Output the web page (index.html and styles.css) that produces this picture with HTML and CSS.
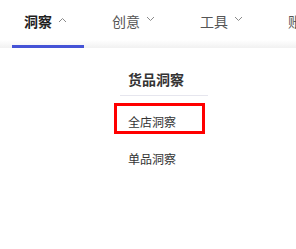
FILE: index.html
```html
<!DOCTYPE html>
<html lang="zh">
<head>
<meta charset="utf-8">
<link rel="stylesheet" href="styles.css">
</head>
<body>
<div class="header">
  <div class="tab active">
    <span class="label">洞察</span>
    <svg class="chev" width="9" height="6" viewBox="0 0 9 6"><path d="M1 5 L4.5 1.5 L8 5" fill="none" stroke="#8a8a8a" stroke-width="1"/></svg>
  </div>
  <div class="tab">
    <span class="label">创意</span>
    <svg class="chev down" width="9" height="6" viewBox="0 0 9 6"><path d="M1 1 L4.5 4.5 L8 1" fill="none" stroke="#8a8a8a" stroke-width="1"/></svg>
  </div>
  <div class="tab">
    <span class="label">工具</span>
    <svg class="chev down" width="9" height="6" viewBox="0 0 9 6"><path d="M1 1 L4.5 4.5 L8 1" fill="none" stroke="#8a8a8a" stroke-width="1"/></svg>
  </div>
  <div class="tab">
    <span class="label">账户</span>
  </div>
</div>
<div class="menu">
  <div class="menu-title">货品洞察</div>
  <div class="menu-item highlighted">全店洞察</div>
  <div class="menu-item">单品洞察</div>
</div>
</body>
</html>
```
FILE: styles.css
```css
html, body {
  margin: 0;
  padding: 0;
  background: #fff;
  overflow: hidden;
  width: 296px;
  height: 249px;
}
body {
  font-family: "Noto Sans CJK SC", "Noto Sans", sans-serif;
}
.header {
  display: flex;
  gap: 16px;
  height: 48px;
  padding-left: 12px;
  box-sizing: border-box;
  background: linear-gradient(to bottom, #ffffff 0, #ffffff 40px, #f1f1f1 48px);
  white-space: nowrap;
}
.tab {
  flex: 0 0 72px;
  box-sizing: border-box;
  padding: 13px 12px 0;
  display: flex;
  align-items: flex-start;
  gap: 6px;
  height: 48px;
  border-bottom: 3px solid transparent;
}
.tab.active {
  border-bottom-color: #4553d6;
}
.label {
  font-size: 14px;
  line-height: 16px;
  color: #555;
}
.tab.active .label {
  color: #1f1f1f;
  font-weight: 700;
}
.chev {
  margin-top: 4px;
  flex: none;
}
.chev.down {
  margin-top: 3px;
}
.menu {
  margin-left: 114px;
  width: 94px;
  padding-top: 20px;
}
.menu-title {
  margin: 0 0 0 6px;
  padding: 0 0 5px 8px;
  font-size: 14px;
  line-height: 22px;
  font-weight: 700;
  color: #333;
  border-bottom: 1px solid #e6e6ee;
}
.menu-item {
  width: 91px;
  height: 31px;
  box-sizing: border-box;
  border: 3px solid transparent;
  padding: 9px 0 0 11px;
  font-size: 12px;
  line-height: 14px;
  color: #333;
  margin-top: 6px;
}
.menu-item.highlighted {
  border-color: #ff0000;
  margin-top: 7px;
}
```
